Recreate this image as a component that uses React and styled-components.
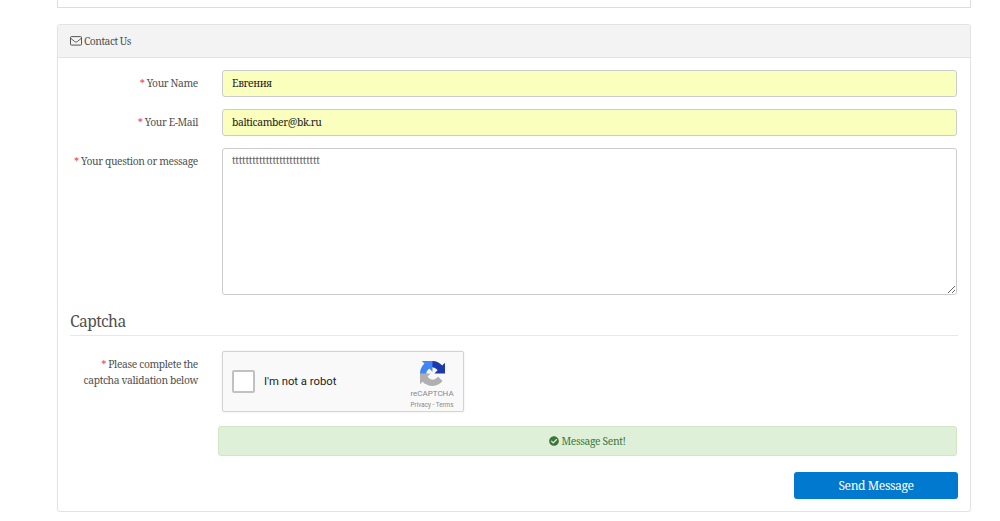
import styled, { createGlobalStyle } from "styled-components";
import { FaCheckCircle } from "react-icons/fa";

export default function App() {
  return (
    <>
      <GlobalStyle />
      <Container>
        <PreviousPanel />
        <Panel>
          <PanelHeading>
            <EnvelopeIcon />
            <Text $spacing="-0.48px">Contact Us</Text>
          </PanelHeading>
          <PanelBody>
            <Field>
              <Label>
                <Required>*</Required> Your Name
              </Label>
              <Input defaultValue="Евгения" spellCheck={false} />
            </Field>
            <Field>
              <Label>
                <Required>*</Required> Your E-Mail
              </Label>
              <Input defaultValue="balticamber@bk.ru" spellCheck={false} />
            </Field>
            <Field>
              <Label>
                <Required>*</Required> Your question or message
              </Label>
              <MessageBox defaultValue="tttttttttttttttttttttttttt" spellCheck={false} />
            </Field>
            <Legend>Captcha</Legend>
            <Field>
              <Label>
                <Required>*</Required> Please complete the
                <br />
                captcha validation below
              </Label>
              <Captcha />
            </Field>
            <Alert>
              <FaCheckCircle size={10} />
              <Text $spacing="-0.36px">Message Sent!</Text>
            </Alert>
            <Actions>
              <SendButton type="button">Send Message</SendButton>
            </Actions>
          </PanelBody>
        </Panel>
      </Container>
    </>
  );
}

function EnvelopeIcon() {
  return (
    <svg width="12" height="10" viewBox="0 0 12 10" fill="none" stroke="#444" strokeWidth="0.9">
      <rect x="0.5" y="0.6" width="11" height="8.5" rx="1" />
      <path d="M.6 2.2C2.2 3.5 3.4 4.5 4.6 5.5c.9.7 1.9.7 2.8 0C8.6 4.5 9.8 3.5 11.4 2.2" />
    </svg>
  );
}

function Captcha() {
  return (
    <CaptchaBox>
      <CheckSquare />
      <CaptchaLabel>I'm not a robot</CaptchaLabel>
      <CaptchaBrand>
        <CaptchaLogo />
        <BrandName>reCAPTCHA</BrandName>
        <BrandLinks>Privacy - Terms</BrandLinks>
      </CaptchaBrand>
    </CaptchaBox>
  );
}

const ARROW =
  "M64 31.955c-.002-.46-.012-.918-.033-1.373V4.555l-7.194 7.195C50.884 4.541 41.928 0 31.9 0 21.464 0 12.192 4.921 6.35 12.627l11.793 11.917c1.156-2.138 2.798-3.974 4.789-5.368 2.071-1.616 5.005-2.937 9.068-2.937.491 0 .87.057 1.148.165 5.034.397 9.398 3.175 11.967 7.208L36.767 31.96c10.573-.041 22.516-.066 27.233-.005z";

// the same arrow, turned a quarter each time and laid over the last one
function CaptchaLogo() {
  return (
    <svg width="25" height="25" viewBox="0 0 64 64">
      <path fill="#1c3aa9" d={ARROW} />
      <path fill="#4285f4" d={ARROW} transform="rotate(-90 32 32)" />
      <path fill="#b0b0b0" d={ARROW} transform="rotate(180 32 32)" />
    </svg>
  );
}

const GlobalStyle = createGlobalStyle`
  * {
    box-sizing: border-box;
  }
  body {
    margin: 0;
    background: #fff;
    color: #505050;
    font-family: "Noto Serif", "Droid Serif", "DejaVu Serif", serif;
    font-size: 10.3px;
    overflow: hidden;
  }
`;

const Container = styled.div`
  width: 914px;
  margin-left: 57px;
`;

const PreviousPanel = styled.div`
  height: 8px;
  border: 1px solid #ddd;
  border-top: 0;
`;

const Panel = styled.section`
  height: 488px;
  margin-top: 16px;
  border: 1px solid #e3e3e3;
  border-radius: 3px;
  box-shadow: 0 1px 1px rgba(0, 0, 0, 0.05);
`;

const PanelHeading = styled.header`
  display: flex;
  align-items: center;
  gap: 2px;
  height: 33px;
  padding: 0 12px 1px;
  background: #f3f3f3;
  border-bottom: 1px solid #e3e3e3;
  border-radius: 2px 2px 0 0;
`;

const Text = styled.span`
  letter-spacing: ${({ $spacing }) => $spacing};
`;

const PanelBody = styled.div`
  padding: 12px 12px 0;
`;

const Field = styled.div`
  display: grid;
  grid-template-columns: 128px 735px;
  column-gap: 24px;
  align-items: start;
  margin-bottom: 12px;
`;

const Label = styled.label`
  padding-top: 5px;
  line-height: 16px;
  text-align: right;
  white-space: nowrap;
  letter-spacing: -0.37px;
`;

const Required = styled.span`
  color: #e8404a;
`;

const Input = styled.input`
  width: 100%;
  height: 27px;
  padding: 0 10px 2px 9px;
  border: 1px solid #ccc;
  border-radius: 3px;
  background: #faffbd;
  color: #222;
  font: inherit;
  letter-spacing: -0.34px;
  outline: 0;
`;

const MessageBox = styled.textarea`
  display: block;
  width: 100%;
  height: 147px;
  padding: 3px 10px 3px 9px;
  border: 1px solid #ccc;
  border-radius: 3px;
  color: #666;
  font: inherit;
  letter-spacing: -0.25px;
  line-height: 16px;
  outline: 0;
  resize: vertical;
`;

const Legend = styled.h2`
  height: 29px;
  margin: 0 0 15px;
  border-bottom: 1px solid #e8e8e8;
  font-size: 15.6px;
  font-weight: 400;
  letter-spacing: -0.6px;
  line-height: 29px;
`;

const CaptchaBox = styled.div`
  display: flex;
  align-items: center;
  width: 242px;
  height: 61px;
  padding: 0 8px 0 9px;
  border: 1px solid #d3d3d3;
  border-radius: 2px;
  background: #f9f9f9;
  box-shadow: 0 0 3px rgba(0, 0, 0, 0.08);
  font-family: Roboto, sans-serif;
`;

const CheckSquare = styled.span`
  width: 23px;
  height: 23px;
  border: 2px solid #c1c1c1;
  border-radius: 2px;
  background: #fff;
`;

const CaptchaLabel = styled.span`
  margin-left: 9px;
  color: #222;
  font-size: 11.3px;
`;

const CaptchaBrand = styled.div`
  display: flex;
  flex-direction: column;
  align-items: center;
  width: 46px;
  margin-left: auto;
  padding-top: 8px;
  color: #888;
  white-space: nowrap;
`;

const BrandName = styled.span`
  margin-top: 3px;
  font-size: 8px;
  line-height: 10px;
`;

const BrandLinks = styled.span`
  margin-top: 2px;
  font-size: 6.3px;
  line-height: 9px;
`;

const Alert = styled.div`
  display: flex;
  align-items: center;
  justify-content: center;
  gap: 2px;
  height: 30px;
  margin: 14px 1px 0 148px;
  padding-bottom: 1px;
  border: 1px solid #d0e6c4;
  border-radius: 3px;
  background: #dff0d8;
  color: #3c763d;
`;

const Actions = styled.div`
  display: flex;
  justify-content: flex-end;
  margin-top: 16px;
`;

const SendButton = styled.button`
  width: 164px;
  height: 27px;
  padding: 0;
  border: 0;
  border-radius: 3px;
  background: #0079ce;
  color: #fff;
  font: inherit;
  font-size: 12.2px;
  letter-spacing: -0.45px;
`;
